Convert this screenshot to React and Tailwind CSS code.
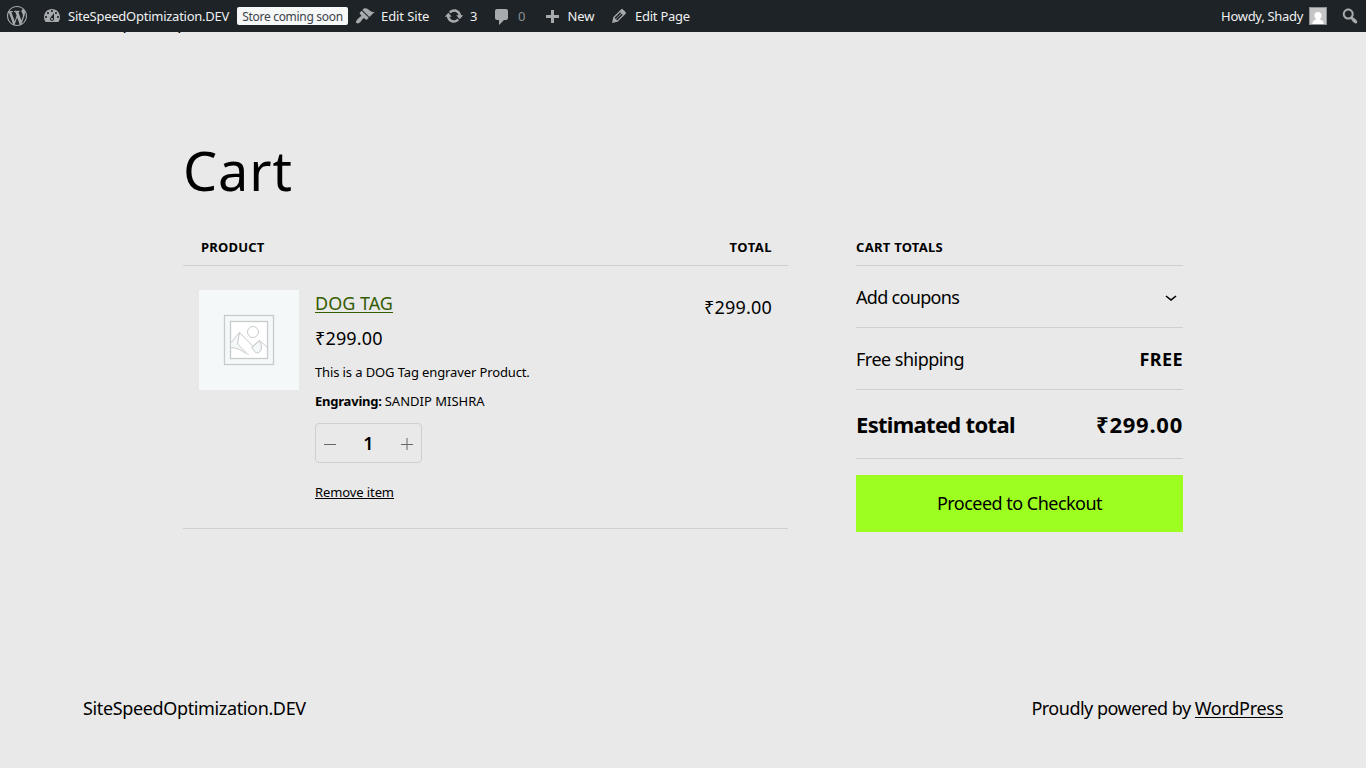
import React from "react";

const icons = {
  wordpress: "M20 10c0-5.51-4.49-10-10-10C4.48 0 0 4.49 0 10c0 5.52 4.48 10 10 10 5.51 0 10-4.48 10-10zM7.78 15.37L4.37 6.22c.55-.02 1.17-.08 1.17-.08.5-.06.44-1.13-.06-1.11 0 0-1.45.11-2.37.11-.18 0-.37 0-.58-.01C4.12 2.69 6.87 1.11 10 1.11c2.33 0 4.45.87 6.05 2.34-.68-.11-1.65.39-1.65 1.58 0 .74.45 1.36.9 2.1.35.61.55 1.36.55 2.46 0 1.49-1.4 5-1.4 5l-3.03-8.37c.54-.02.82-.17.82-.17.5-.05.44-1.25-.06-1.22 0 0-1.44.12-2.38.12-.87 0-2.33-.12-2.33-.12-.5-.03-.56 1.2-.06 1.22l.92.08 1.26 3.41zM17.41 10c.24-.64.74-1.87.43-4.25.7 1.29 1.05 2.71 1.05 4.25 0 3.29-1.73 6.24-4.4 7.78.97-2.59 1.94-5.2 2.92-7.78zM6.1 18.09C3.12 16.65 1.11 13.53 1.11 10c0-1.3.23-2.48.72-3.59C3.25 10.3 4.67 14.2 6.1 18.09zm4.03-6.63l2.58 6.98c-.86.29-1.76.45-2.71.45-.79 0-1.57-.11-2.29-.33.81-2.38 1.62-4.74 2.42-7.1z",
  dashboard: "M3.76 16h12.48c1.1-1.37 1.76-3.11 1.76-5 0-4.42-3.58-8-8-8s-8 3.58-8 8c0 1.89.66 3.63 1.76 5zM10 4c.55 0 1 .45 1 1s-.45 1-1 1-1-.45-1-1 .45-1 1-1zM6 6c.55 0 1 .45 1 1s-.45 1-1 1-1-.45-1-1 .45-1 1-1zm8 0c.55 0 1 .45 1 1s-.45 1-1 1-1-.45-1-1 .45-1 1-1zm-5.37 5.55L12 7v6c0 1.1-.9 2-2 2s-2-.9-2-2c0-.57.24-1.08.63-1.45zM4 10c.55 0 1 .45 1 1s-.45 1-1 1-1-.45-1-1 .45-1 1-1zm12 0c.55 0 1 .45 1 1s-.45 1-1 1-1-.45-1-1 .45-1 1-1zm-5 3c0-.55-.45-1-1-1s-1 .45-1 1 .45 1 1 1 1-.45 1-1z",
  brush: "M14.48 11.06L7.41 3.99l1.5-1.5c.5-.56 2.3-.47 3.51.32 1.21.8 1.43 1.28 2.91 2.1 1.18.64 2.45 1.26 4.45.85zm-.71.71L6.7 4.7 4.93 6.47c-.39.39-.39 1.02 0 1.41l1.06 1.06c.39.39.39 1.03 0 1.42-.6.6-1.43 1.11-2.21 1.69-.35.26-.7.53-1.01.84C1.43 14.23.4 16.08 1.4 17.07c.99 1 2.84-.03 4.18-1.36.31-.31.58-.66.85-1.02.57-.78 1.08-1.61 1.69-2.21.39-.39 1.02-.39 1.41 0l1.06 1.06c.39.39 1.02.39 1.41 0z",
  update: "M10.2 3.28c3.53 0 6.43 2.61 6.92 6h2.08l-3.5 4-3.5-4h2.32c-.45-1.97-2.21-3.45-4.32-3.45-1.45 0-2.73.71-3.54 1.78L4.95 5.66C6.23 4.2 8.11 3.28 10.2 3.28zm-.4 13.44c-3.52 0-6.43-2.61-6.92-6H.8l3.5-4c1.17 1.33 2.33 2.67 3.5 4H5.48c.45 1.97 2.21 3.45 4.32 3.45 1.45 0 2.73-.71 3.54-1.78l1.71 1.95c-1.28 1.46-3.15 2.38-5.25 2.38z",
  comment: "M5 2h9c1.1 0 2 .9 2 2v7c0 1.1-.9 2-2 2h-2l-5 5v-5H5c-1.1 0-2-.9-2-2V4c0-1.1.9-2 2-2z",
  plus: "M17 7v3h-5v5H9v-5H4V7h5V2h3v5h5z",
  edit: "M13.89 3.39l2.71 2.72c.46.46.42 1.24.03 1.64l-8.01 8.02-5.56 1.16 1.16-5.58s7.6-7.63 7.99-8.03c.39-.39 1.22-.39 1.68.07zm-2.73 2.79l-5.59 5.61 1.11 1.11 5.54-5.65zm-2.97 8.23l5.58-5.6-1.07-1.08-5.59 5.6z",
  search: "M12.14 4.18c1.87 1.87 2.11 4.75.72 6.89.12.1.22.21.36.31.2.16.47.36.81.59.34.24.56.39.66.47.42.31.73.57.94.78.32.32.6.65.84 1 .25.35.44.69.59 1.04.14.35.21.68.18 1-.02.32-.14.59-.36.81s-.49.34-.81.36c-.31.02-.65-.04-.99-.19-.35-.14-.7-.34-1.04-.59-.35-.24-.68-.52-1-.84-.21-.21-.47-.52-.77-.93-.1-.13-.25-.35-.47-.66-.22-.32-.4-.57-.56-.78-.16-.2-.29-.35-.44-.5-2.07 1.09-4.69.76-6.44-.98-2.14-2.15-2.14-5.64 0-7.78 2.15-2.15 5.63-2.15 7.78 0zm-1.41 6.36c1.36-1.37 1.36-3.58 0-4.95-1.37-1.37-3.59-1.37-4.95 0-1.37 1.37-1.37 3.58 0 4.95 1.36 1.37 3.58 1.37 4.95 0z",
};

function Icon({ name, className = "" }) {
  return (
    <svg viewBox="0 0 20 20" className={"h-5 w-5 shrink-0 fill-[#a7aaad] " + className}>
      <path d={icons[name]} />
    </svg>
  );
}

function T({ className = "", children }) {
  return <span className={"inline-block whitespace-nowrap " + className}>{children}</span>;
}

function AdminBar() {
  return (
    <header className="flex h-8 shrink-0 items-center bg-[#1d2327] text-[13px] leading-8 text-[#f0f0f1]">
      <Icon name="wordpress" className="ml-[7px]" />
      <div className="ml-[15px] flex w-[195px] items-center">
        <Icon name="dashboard" />
        <T className="ml-1.5 tracking-[-0.25px]">SiteSpeedOptimization.DEV</T>
      </div>
      <div className="flex h-[18px] w-[111px] items-center justify-center rounded-[2px] bg-[#f6f7f7] text-xs text-[#3c434a]">
        <T className="pt-px tracking-[-0.3px]">Store coming soon</T>
      </div>
      <div className="ml-[7px] flex w-[89px] items-center">
        <Icon name="brush" />
        <T className="ml-1.5 tracking-[-0.1px]">Edit Site</T>
      </div>
      <div className="flex w-[48px] items-center">
        <Icon name="update" />
        <T className="ml-1.5">3</T>
      </div>
      <div className="flex w-[49.5px] items-center">
        <Icon name="comment" className="mt-0.5" />
        <T className="ml-1.5 text-[#8a8f94]">0</T>
      </div>
      <div className="flex w-[67.5px] items-center">
        <Icon name="plus" className="mt-[3px]" />
        <T className="ml-1.5 tracking-[-0.1px]">New</T>
      </div>
      <div className="flex items-center">
        <Icon name="edit" />
        <T className="ml-1.5 tracking-[-0.25px]">Edit Page</T>
      </div>
      <div className="ml-auto flex items-center">
        <T className="tracking-[-0.3px]">Howdy, Shady</T>
        <svg viewBox="0 0 18 18" className="ml-1.5 h-[18px] w-[18px]">
          <rect width="18" height="18" fill="#8c8f94" />
          <rect x="1" y="1" width="16" height="16" fill="#c5c5c5" />
          <path d="M9 5c2.300 0 3.600 1.500 3.600 3.500 0 1.500-.6 2.500-1.500 3.200v.8c1.800.5 3.300 1.200 3.600 4.500H3.300c.3-3.300 1.800-4 3.600-4.500v-.8C6 11 5.400 10 5.400 8.500 5.400 6.500 6.700 5 9 5z" fill="#fff" />
        </svg>
        <Icon name="search" className="ml-[13px] mr-[6px]" />
      </div>
    </header>
  );
}

function Placeholder() {
  return (
    <svg viewBox="0 0 100 100" className="h-[100px] w-[100px] shrink-0">
      <rect width="100" height="100" fill="#f5f8f8" />
      <g stroke="#c8cbcb" fill="none">
        <rect x="25.500" y="25.500" width="49" height="49" strokeWidth="1.300" />
        <rect x="31.500" y="31.500" width="37" height="37" fill="#fff" strokeWidth="1.300" />
        <circle cx="54" cy="42" r="5.500" />
        <path d="M32 52.500 40.500 42.500 38.500 54 49.500 65C42 60 37 58 32 57.500z" fill="#f5f8f8" stroke="none" />
        <path d="M32 52.500 40.500 42.500 55.500 58M40.500 42.500 38.500 54 49.500 65M32 57.500C38 58 43 60 46.500 63.500" />
        <path d="M60.500 50.500 62.500 56 62 60.500 59 63 56.500 62.500 52.500 57.500z" fill="#f5f8f8" />
        <path d="M52.500 57.500 60.500 50.500 68 57" />
      </g>
    </svg>
  );
}

export default function App() {
  return (
    <div className="flex h-[768px] w-[1366px] flex-col overflow-hidden bg-[#e9e9e9] font-['Noto_Sans','Liberation_Sans',sans-serif] text-[18px] text-black">
      <AdminBar />
      <div className="flex h-px shrink-0 items-end overflow-hidden pl-[83px] leading-[30px]">
        <T className="-mb-1 tracking-[-0.36px]">SiteSpeedOptimization.DEV</T>
      </div>
      <main className="mx-[183px] h-[660px] shrink-0 pt-[103px]">
        <h1 className="h-[68px] text-[54px] leading-[68px]"><T className="tracking-[0.9px]">Cart</T></h1>
        <div className="mt-8 flex justify-between">
          <section className="w-[605px]">
            <div className="flex h-[30px] justify-between border-b border-[#cfcfcf] pl-[18px] pr-4 text-[13px] font-bold leading-[22px]">
              <T className="tracking-[0.2px]">PRODUCT</T>
              <T className="tracking-[0.5px]">TOTAL</T>
            </div>
            <div className="flex h-[263px] border-b border-[#cfcfcf] px-4 pt-6">
              <Placeholder />
              <div className="ml-4 flex flex-col items-start">
                <a className="mt-px block h-[22px] border-b border-[#345c00] leading-[24px] text-[#345c00]"><T>DOG TAG</T></a>
                <div className="mt-[11px] h-7 leading-7"><T className="tracking-[0.15px]">₹299.00</T></div>
                <div className="mt-[9px] h-[22px] text-[13px] leading-[22px]"><T className="tracking-[-0.12px]">This is a DOG Tag engraver Product.</T></div>
                <div className="mt-[7px] flex h-[22px] gap-[3px] text-[13px] leading-[22px]"><T className="font-bold tracking-[-0.22px]">Engraving:</T><T>SANDIP MISHRA</T></div>
                <div className="mt-[11px] flex h-10 w-[107px] items-center justify-between rounded-[4px] border border-[#cfcfcf] px-2">
                  <svg viewBox="0 0 12 14" className="h-[14px] w-3"><path d="M0 8.500h12" stroke="#666" /></svg>
                  <T className="font-semibold">1</T>
                  <svg viewBox="0 0 12 14" className="h-[14px] w-3"><path d="M0 8.500h12" stroke="#666" /><path d="M6 2v12" stroke="#666" /></svg>
                </div>
                <div className="mt-[20px] h-[16px] border-b border-black text-[13px] leading-[19px]"><T className="tracking-[-0.1px]">Remove item</T></div>
              </div>
              <div className="ml-auto mt-[3px] leading-7"><T className="tracking-[0.2px]">₹299.00</T></div>
            </div>
          </section>
          <aside className="w-[327px]">
            <div className="h-[30px] border-b border-[#cfcfcf] text-[13px] font-bold leading-[22px]"><T className="tracking-[0.28px]">CART TOTALS</T></div>
            <div className="flex h-[62px] items-center justify-between border-b border-[#cfcfcf]">
              <T className="pt-0.5 tracking-[-0.68px]">Add coupons</T>
              <svg viewBox="0 0 24 24" className="h-6 w-6"><path d="M17.500 11.600 12 16l-5.500-4.400.9-1.200L12 14l4.500-3.600 1 1.200z" /></svg>
            </div>
            <div className="flex h-[62px] items-center justify-between border-b border-[#cfcfcf] pt-0.5">
              <T className="tracking-[-0.52px]">Free shipping</T>
              <T className="font-bold tracking-[0.4px]">FREE</T>
            </div>
            <div className="flex h-[69px] items-center justify-between border-b border-[#cfcfcf] text-[22px] font-bold">
              <T className="tracking-[-0.68px]">Estimated total</T>
              <T className="tracking-[0.75px]">₹299.00</T>
            </div>
            <button className="mt-4 flex h-[57px] w-full items-center justify-center bg-[#9dff20]"><T className="tracking-[-0.52px]">Proceed to Checkout</T></button>
          </aside>
        </div>
      </main>
      <footer className="mx-[83px] flex justify-between leading-[30px]">
        <T className="tracking-[-0.36px]">SiteSpeedOptimization.DEV</T>
        <div className="flex gap-1"><T className="tracking-[-0.5px]">Proudly powered by</T><a className="h-[25px] border-b border-black"><T className="tracking-[-0.28px]">WordPress</T></a></div>
      </footer>
    </div>
  );
}
